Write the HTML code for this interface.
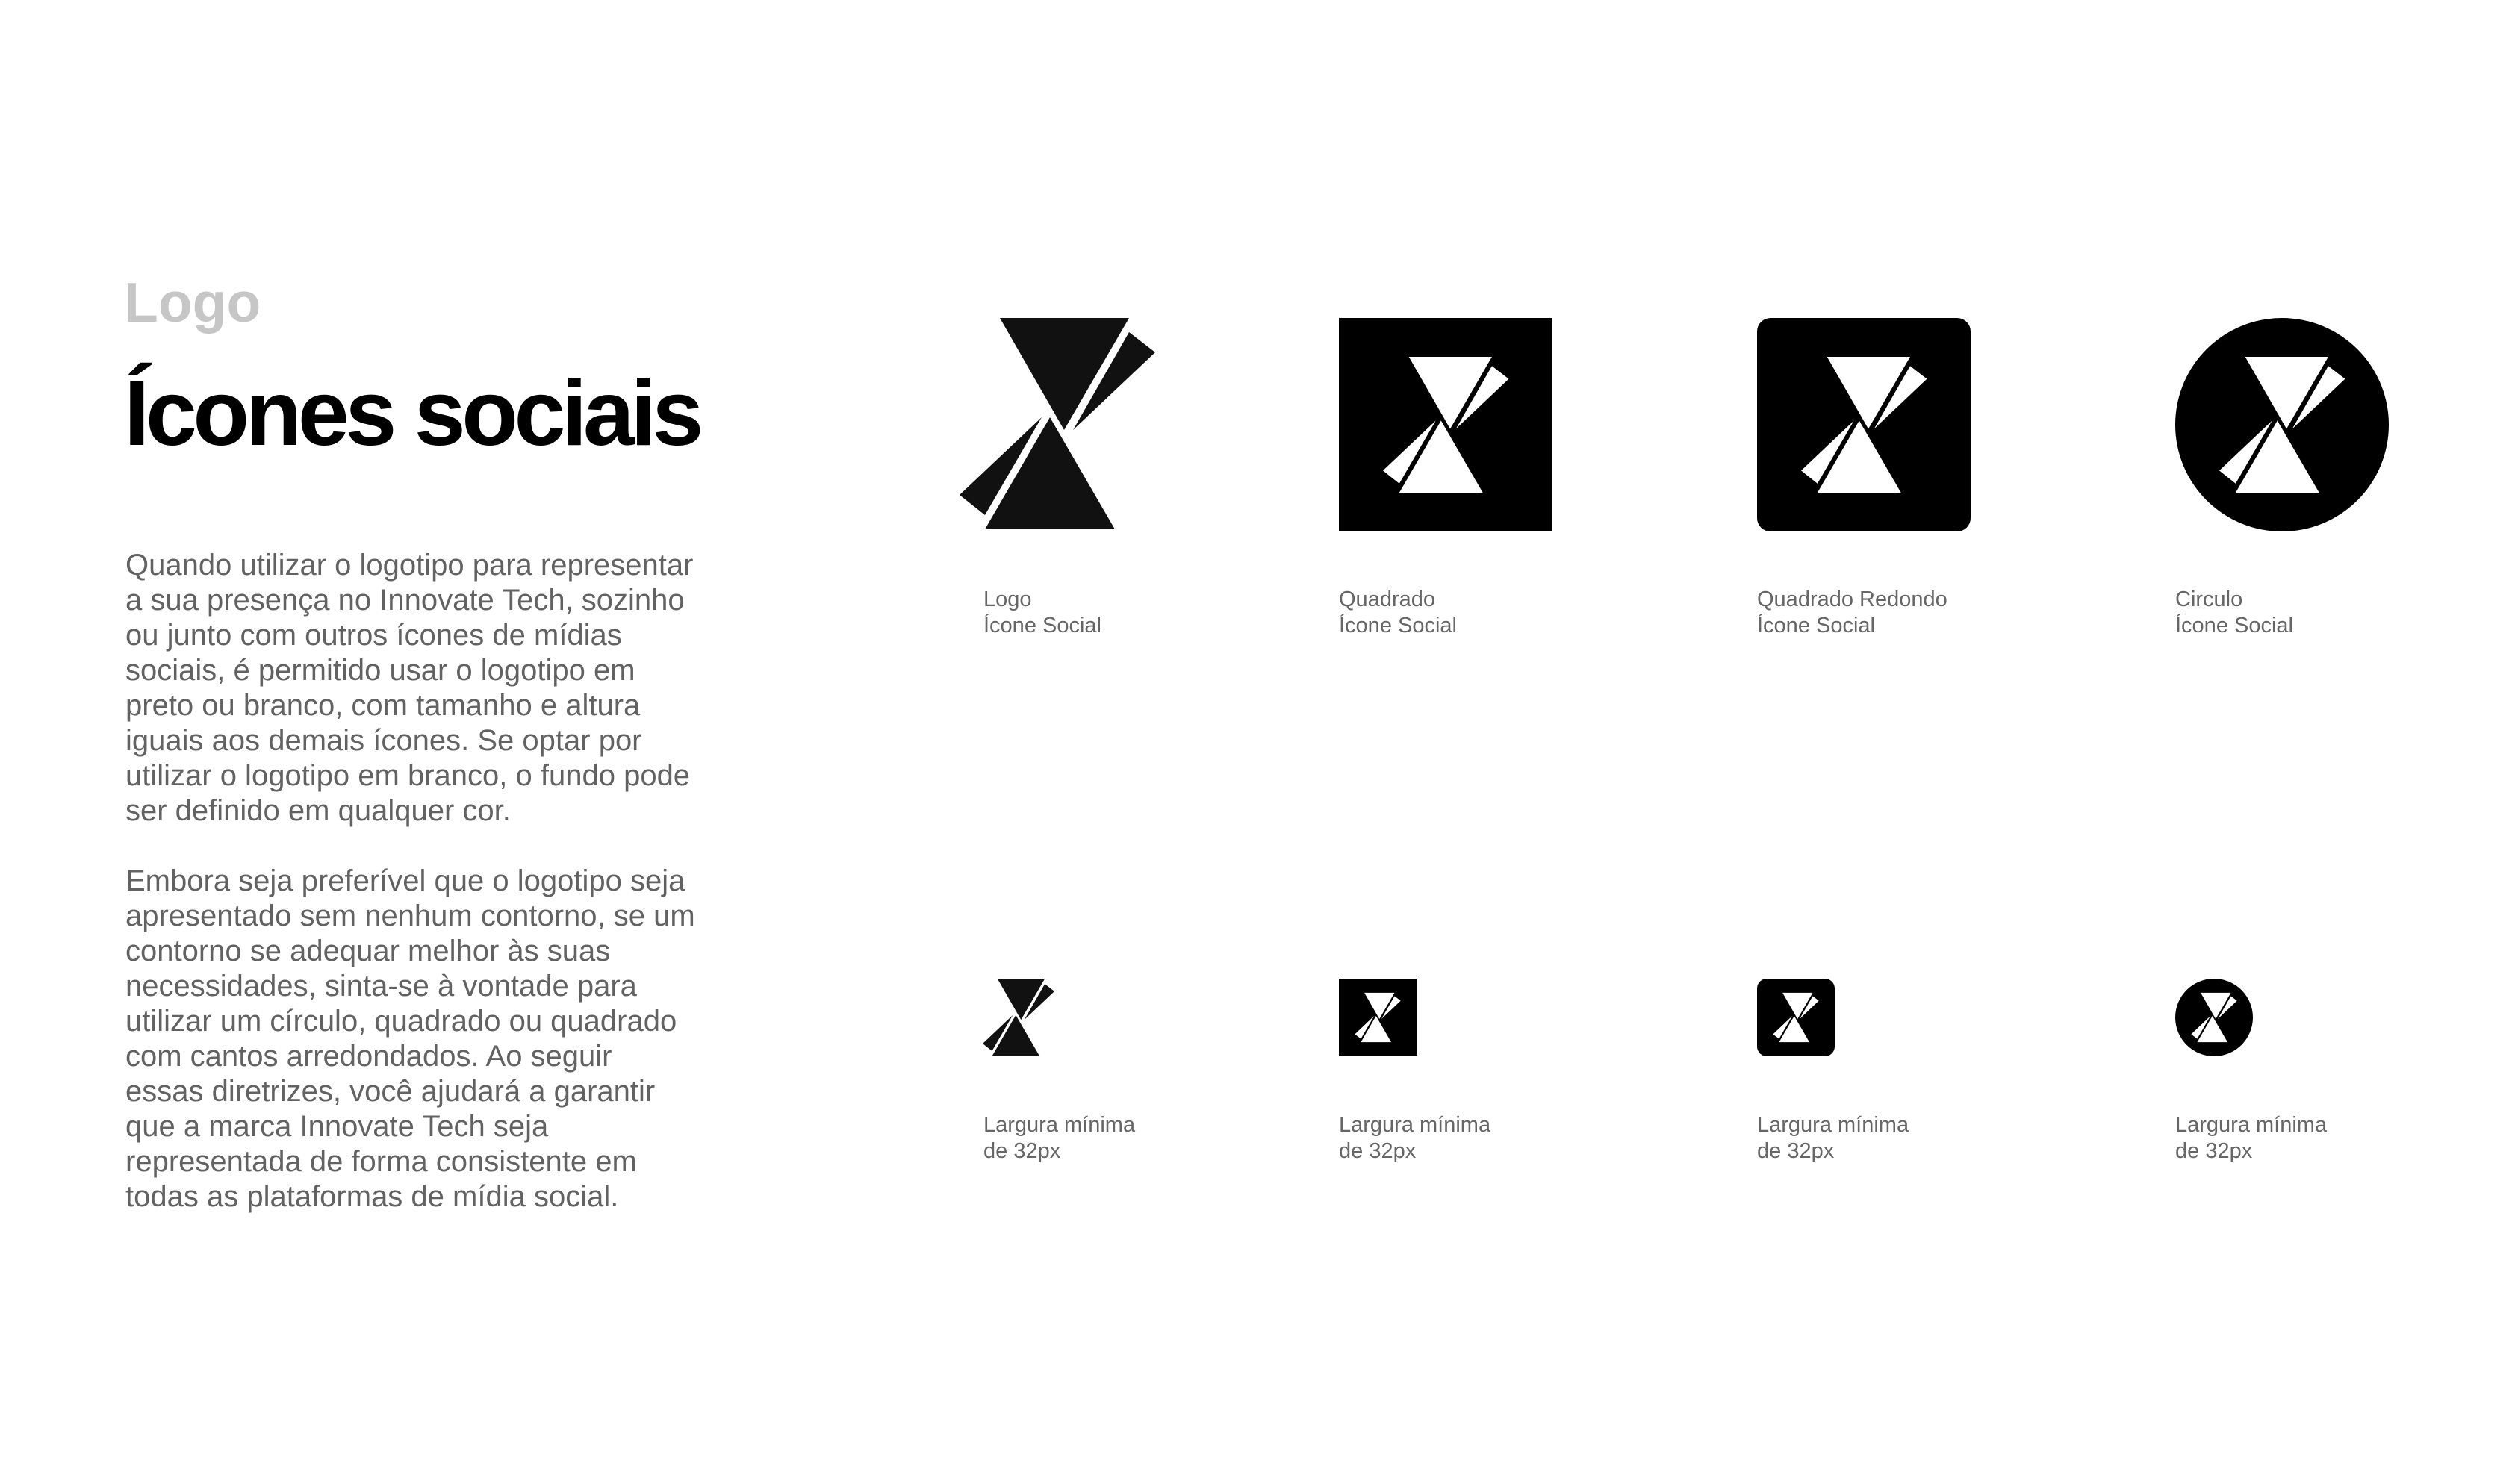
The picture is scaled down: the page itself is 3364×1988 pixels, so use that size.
<!DOCTYPE html>
<html><head><meta charset="utf-8">
<style>
html,body{margin:0;padding:0;background:#fff;}
body{width:3364px;height:1988px;position:relative;overflow:hidden;font-family:"Liberation Sans",Arial,sans-serif;}
.a{position:absolute;white-space:nowrap;}
.h1{left:166px;top:368px;font-size:75px;font-weight:bold;color:#c6c6c6;line-height:1;}
.h2{left:166px;top:492px;font-size:124px;font-weight:bold;color:#000;line-height:1;letter-spacing:-5.5px;}
.p{left:168px;font-size:40px;color:#626262;line-height:47px;}
.lab{font-size:29px;color:#666;line-height:35px;}
svg{position:absolute;}
</style></head><body>
<div class="a h1">Logo</div>
<div class="a h2">Ícones sociais</div>
<div class="a p" style="top:734px">Quando utilizar o logotipo para representar<br>a sua presença no Innovate Tech, sozinho<br>ou junto com outros ícones de mídias<br>sociais, é permitido usar o logotipo em<br>preto ou branco, com tamanho e altura<br>iguais aos demais ícones. Se optar por<br>utilizar o logotipo em branco, o fundo pode<br>ser definido em qualquer cor.</div>
<div class="a p" style="top:1157px">Embora seja preferível que o logotipo seja<br>apresentado sem nenhum contorno, se um<br>contorno se adequar melhor às suas<br>necessidades, sinta-se à vontade para<br>utilizar um círculo, quadrado ou quadrado<br>com cantos arredondados. Ao seguir<br>essas diretrizes, você ajudará a garantir<br>que a marca Innovate Tech seja<br>representada de forma consistente em<br>todas as plataformas de mídia social.</div>

<svg width="0" height="0" style="position:absolute">
<defs>
<g id="lg">
<polygon points="54,0 227,0 140,150"/>
<polygon points="227,19 262,46 152,150"/>
<polygon points="121,133 34,283 208,283"/>
<polygon points="110,133 0,237 34,264"/>
</g>
</defs>
</svg>

<svg style="left:1285px;top:426px" width="262" height="283" viewBox="0 0 262 283"><use href="#lg" fill="#111"/></svg>

<svg style="left:1793px;top:426px" width="286" height="286" viewBox="0 0 286 286"><rect width="286" height="286" fill="#000"/><g transform="translate(59,52) scale(0.643)"><use href="#lg" fill="#fff"/></g></svg>

<svg style="left:2353px;top:426px" width="286" height="286" viewBox="0 0 286 286"><rect width="286" height="286" rx="18" fill="#000"/><g transform="translate(59,52) scale(0.643)"><use href="#lg" fill="#fff"/></g></svg>

<svg style="left:2913px;top:426px" width="286" height="286" viewBox="0 0 286 286"><circle cx="143" cy="143" r="143" fill="#000"/><g transform="translate(59,52) scale(0.643)"><use href="#lg" fill="#fff"/></g></svg>

<div class="a lab" style="left:1317px;top:786px">Logo<br>Ícone Social</div>
<div class="a lab" style="left:1793px;top:786px">Quadrado<br>Ícone Social</div>
<div class="a lab" style="left:2353px;top:786px">Quadrado Redondo<br>Ícone Social</div>
<div class="a lab" style="left:2913px;top:786px">Circulo<br>Ícone Social</div>

<svg style="left:1316px;top:1311px" width="96" height="104" viewBox="0 0 262 283"><use href="#lg" fill="#111"/></svg>

<svg style="left:1793px;top:1311px" width="104" height="104" viewBox="0 0 286 286"><rect width="286" height="286" fill="#000"/><g transform="translate(59,52) scale(0.643)"><use href="#lg" fill="#fff"/></g></svg>

<svg style="left:2353px;top:1311px" width="104" height="104" viewBox="0 0 286 286"><rect width="286" height="286" rx="36" fill="#000"/><g transform="translate(59,52) scale(0.643)"><use href="#lg" fill="#fff"/></g></svg>

<svg style="left:2913px;top:1311px" width="104" height="104" viewBox="0 0 286 286"><circle cx="143" cy="143" r="143" fill="#000"/><g transform="translate(59,52) scale(0.643)"><use href="#lg" fill="#fff"/></g></svg>

<div class="a lab" style="left:1317px;top:1490px">Largura mínima<br>de 32px</div>
<div class="a lab" style="left:1793px;top:1490px">Largura mínima<br>de 32px</div>
<div class="a lab" style="left:2353px;top:1490px">Largura mínima<br>de 32px</div>
<div class="a lab" style="left:2913px;top:1490px">Largura mínima<br>de 32px</div>
</body></html>
